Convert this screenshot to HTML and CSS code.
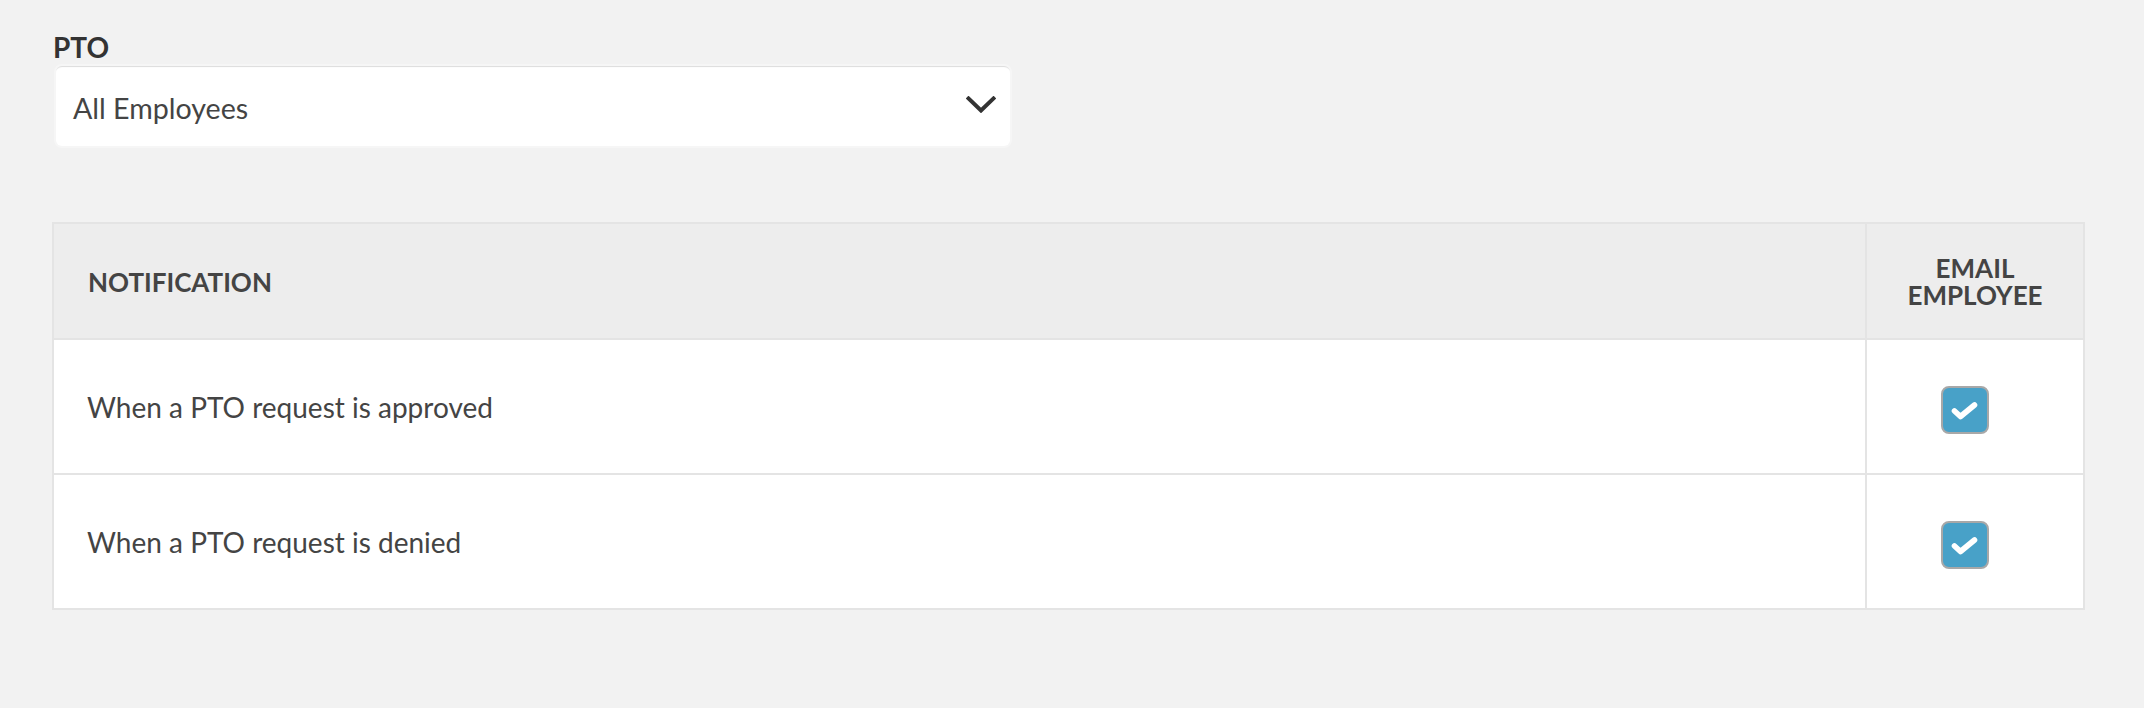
FILE: index.html
```html
<!DOCTYPE html>
<html lang="en">
<head>
<meta charset="utf-8">
<title>PTO Notifications</title>
<link rel="stylesheet" href="styles.css">
</head>
<body>
<main class="page">
  <section class="field">
    <label class="field-label">PTO</label>
    <div class="select">
      <span class="select-value">All Employees</span>
      <svg class="chevron" width="30" height="17" viewBox="0 0 30 17" aria-hidden="true">
        <polyline points="2.5,2.5 15,14.5 27.5,2.5" fill="none" stroke="#333" stroke-width="4" stroke-linecap="square" stroke-linejoin="miter"/>
      </svg>
    </div>
  </section>

  <section class="table">
    <div class="row head">
      <div class="cell name">NOTIFICATION</div>
      <div class="cell opt">EMAIL<br>EMPLOYEE</div>
    </div>
    <div class="row">
      <div class="cell name">When a PTO request is approved</div>
      <div class="cell opt">
        <span class="checkbox">
          <svg width="44" height="44" viewBox="0 0 44 44" aria-hidden="true">
            <polyline points="11.5,23 17.5,28.5 31.5,17" fill="none" stroke="#fff" stroke-width="5.6" stroke-linecap="round" stroke-linejoin="round"/>
          </svg>
        </span>
      </div>
    </div>
    <div class="row">
      <div class="cell name">When a PTO request is denied</div>
      <div class="cell opt">
        <span class="checkbox">
          <svg width="44" height="44" viewBox="0 0 44 44" aria-hidden="true">
            <polyline points="11.5,23 17.5,28.5 31.5,17" fill="none" stroke="#fff" stroke-width="5.6" stroke-linecap="round" stroke-linejoin="round"/>
          </svg>
        </span>
      </div>
    </div>
  </section>
</main>
</body>
</html>
```

FILE: styles.css
```css
html, body {
  margin: 0;
  padding: 0;
  background: #f2f2f2;
}

body {
  font-family: Lato, "Open Sans", "Liberation Sans", sans-serif;
  color: #444;
}

.page {
  padding: 30px 59px 0 52px;
}

.field {
  display: flex;
  flex-direction: column;
  align-items: flex-start;
}

.field-label {
  font-size: 28px;
  line-height: 34px;
  font-weight: 700;
  color: #333;
  margin-left: 1px;
}

.select {
  margin-top: 2px;
  margin-left: 4px;
  width: 954px;
  height: 80px;
  box-sizing: border-box;
  background: #fff;
  border-radius: 6px;
  box-shadow: inset 0 2px 1px -1px rgba(0, 0, 0, 0.14), 0 0 0 2px rgba(255, 255, 255, 0.35);
  display: flex;
  align-items: center;
  justify-content: space-between;
  padding: 4px 14px 0 17px;
}

.select-value {
  font-size: 28.6px;
  color: #444;
}

.chevron {
  display: block;
  margin-top: -7px;
}

.table {
  margin-top: 76px;
  border: 2px solid #e4e4e4;
  background: #fff;
}

.row {
  display: grid;
  grid-template-columns: 1fr 218px;
  height: 133px;
  border-top: 2px solid #e4e4e4;
}

.row.head {
  height: 114px;
  border-top: none;
  background: #ededed;
  font-size: 26px;
  font-weight: 700;
  line-height: 27px;
  color: #444;
}

.cell {
  display: flex;
  align-items: center;
}

.cell.name {
  padding-left: 33px;
  font-size: 28px;
  color: #444;
}

.row.head .cell.name {
  font-size: 26px;
  padding-left: 34px;
  padding-top: 2px;
}

.cell.opt {
  border-left: 2px solid #e4e4e4;
  justify-content: center;
  text-align: center;
}

.row.head .cell.opt {
  padding-top: 2px;
}

.checkbox {
  width: 48px;
  height: 48px;
  box-sizing: border-box;
  border: 2px solid #a8a8a8;
  border-radius: 8px;
  background: #48a1c8;
  display: flex;
  align-items: center;
  justify-content: center;
  margin: 6px 20px 0 0;
}

.checkbox svg {
  display: block;
}
```
